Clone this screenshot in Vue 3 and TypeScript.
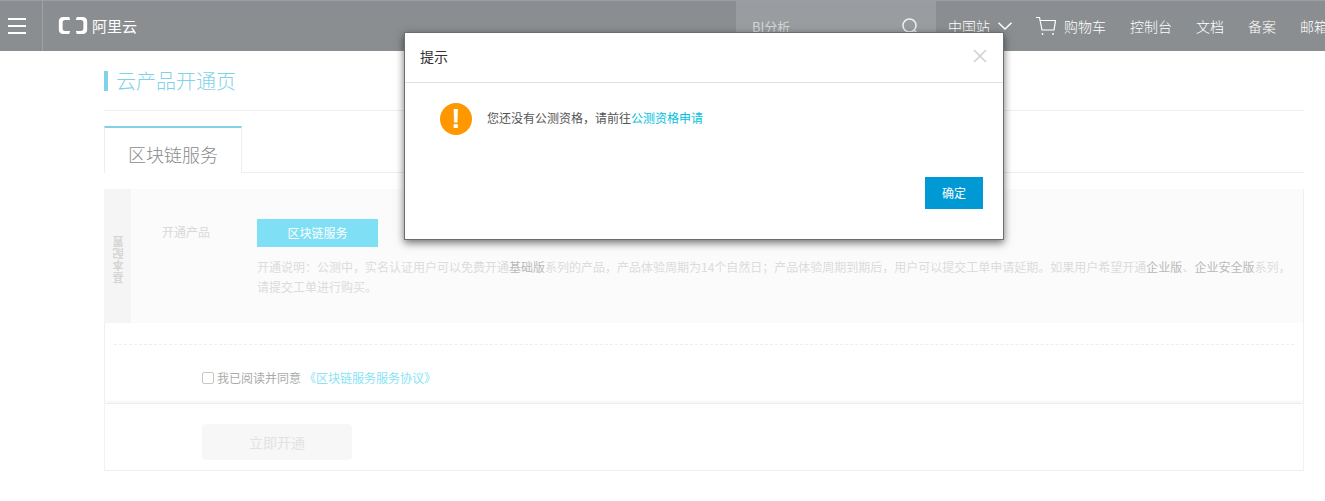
<script setup lang="ts">
const navLinks = ['控制台', '文档', '备案', '邮箱']
</script>

<template>
  <div class="page">
    <header class="topbar">
      <button class="menu-btn" aria-label="menu">
        <i></i>
        <i></i>
        <i></i>
      </button>
      <div class="logo">
        <svg width="30" height="17" viewBox="0 0 30 18">
          <path
            d="M11 0H4.500C1.800 0 0 1.800 0 4.500v9C0 16.200 1.800 18 4.500 18H11l1-3.200H6.500c-1.500 0-2.500-1-2.500-2.300V5.500C4 4.200 5 3.200 6.500 3.200H12z"
            fill="#fff"
          />
          <path
            d="M19 0h6.500C28.200 0 30 1.800 30 4.500v9c0 2.700-1.800 4.500-4.500 4.500H19l-1-3.200h5.500c1.500 0 2.500-1 2.500-2.300V5.500c0-1.300-1-2.300-2.500-2.300H18z"
            fill="#fff"
          />
        </svg>
        <span>阿里云</span>
      </div>
      <div class="search">
        <span>BI分析</span>
        <svg width="18" height="18" viewBox="0 0 18 18" fill="none" stroke="#eee" stroke-width="1.500">
          <circle cx="8.500" cy="8.500" r="6.500" />
          <path d="M13 13l3.500 3.500" />
        </svg>
      </div>
      <nav class="nav">
        <a class="region">
          中国站
          <svg width="14" height="8" viewBox="0 0 14 8" fill="none" stroke="#fff" stroke-width="1.500">
            <path d="M.5.700 7 7 13.500.700" />
          </svg>
        </a>
        <a class="cart">
          <svg width="20" height="20" viewBox="0 0 20 20" fill="none" stroke="#fff" stroke-width="1.200">
            <path d="M0 1.500h3.500L6 14h12l1.500-9.500H4" />
            <circle cx="6.500" cy="18" r=".9" fill="#fff" stroke="none" />
            <circle cx="17" cy="18" r=".9" fill="#fff" stroke="none" />
          </svg>
          购物车
        </a>
        <a v-for="link in navLinks" :key="link">{{ link }}</a>
      </nav>
    </header>

    <main class="content">
      <h1 class="title">云产品开通页</h1>
      <div class="tabs">
        <div class="tab">区块链服务</div>
      </div>

      <section class="box">
        <div class="config">
          <div class="config-side"><span>基本配置</span></div>
          <div class="config-body">
            <div class="row">
              <span class="row-label">开通产品</span>
              <span class="product">区块链服务</span>
            </div>
            <p class="desc">
              开通说明：公测中，实名认证用户可以免费开通<b>基础版</b>系列的产品，产品体验周期为14个自然日；产品体验周期到期后，用户可以提交工单申请延期。如果用户希望开通<b>企业版</b>、<b>企业安全版</b>系列，请提交工单进行购买。
            </p>
          </div>
        </div>
        <div class="agree-wrap">
          <label class="agree">
            <span class="check"></span>
            我已阅读并同意
            <a>《区块链服务服务协议》</a>
          </label>
        </div>
        <div class="footer">
          <button class="open-btn">立即开通</button>
        </div>
      </section>
    </main>

    <div class="dialog">
      <div class="dialog-head">
        <span>提示</span>
        <svg width="14" height="14" viewBox="0 0 14 14" stroke="#cfcfcf" stroke-width="1.500">
          <path d="M1 1l12 12M13 1 1 13" />
        </svg>
      </div>
      <div class="dialog-body">
        <span class="warn">!</span>
        <p>您还没有公测资格，请前往<a>公测资格申请</a></p>
      </div>
      <div class="dialog-foot">
        <button>确定</button>
      </div>
    </div>
  </div>
</template>

<style>
html,
body {
  margin: 0;
  height: 100%;
  overflow: hidden;
  background: #fff;
}
</style>

<style scoped>
.page {
  position: relative;
  height: 501px;
  overflow: hidden;
  font-family: 'Noto Sans CJK SC', 'Liberation Sans', sans-serif;
  font-size: 12px;
}
.topbar {
  display: flex;
  align-items: center;
  height: 50px;
  border-top: 1px solid #9a9eaa;
  background: #8b8e90;
  color: #fff;
  white-space: nowrap;
}
.menu-btn {
  display: flex;
  flex-direction: column;
  justify-content: center;
  flex-shrink: 0;
  gap: 5px;
  width: 43px;
  height: 100%;
  padding: 0 16px 0 8px;
  border: 0;
  border-right: 1px solid #a1a4a6;
  background: none;
}
.menu-btn i {
  display: block;
  height: 2px;
  background: #fff;
}
.logo {
  display: flex;
  align-items: center;
  gap: 4px;
  flex-shrink: 0;
  width: 678px;
  margin-left: 15px;
  padding-bottom: 1px;
  font-size: 15px;
}
.search {
  display: flex;
  align-items: center;
  justify-content: space-between;
  flex-shrink: 0;
  box-sizing: border-box;
  width: 200px;
  height: 100%;
  padding: 0 17px 0 16px;
  background: #9a9da0;
  color: #d5d6d7;
  font-size: 13px;
}
.nav {
  display: flex;
  align-items: center;
  gap: 24px;
  margin-left: 12px;
  font-size: 14px;
  font-weight: 300;
}
.region,
.cart {
  display: flex;
  align-items: center;
  gap: 8px;
}
.content {
  box-sizing: border-box;
  width: 1200px;
  margin-left: 104px;
}
.title {
  box-sizing: border-box;
  height: 40px;
  margin: 20px 0 0;
  padding-left: 12px;
  border-bottom: 1px solid #f0f0f0;
  background: linear-gradient(#7fd2e8, #7fd2e8) no-repeat 0 0 / 4px 20px;
  color: #7fd2e8;
  font-size: 20px;
  font-weight: 300;
  line-height: 20px;
}
.tabs {
  height: 46px;
  margin-top: 15px;
  border-bottom: 1px solid #eee;
}
.tab {
  box-sizing: border-box;
  width: 138px;
  height: 47px;
  border: 1px solid #eee;
  border-top: 2px solid #7fd2e8;
  border-bottom: 0;
  background: #fff;
  color: #8a8a8a;
  font-size: 18px;
  font-weight: 300;
  line-height: 52px;
  text-align: center;
}
.box {
  margin-top: 16px;
  border: 1px solid #efefef;
  border-top: 0;
}
.config {
  display: flex;
  height: 134px;
  margin-left: -1px;
  background: #fbfbfb;
}
.config-side {
  display: flex;
  align-items: center;
  justify-content: center;
  flex-shrink: 0;
  box-sizing: border-box;
  width: 27px;
  padding-top: 5px;
  background: #f5f5f5;
  color: #d6d6d6;
  font-size: 11px;
  font-weight: 700;
}
.config-side span {
  writing-mode: vertical-rl;
  transform: rotate(180deg);
  letter-spacing: 1px;
}
.config-body {
  flex: 1;
  padding: 30px 12px 0 31px;
}
.row {
  display: flex;
}
.row-label {
  width: 95px;
  padding-top: 4px;
  color: #d9d9d9;
}
.product {
  width: 121px;
  height: 28px;
  background: #7fe0f5;
  color: #fff;
  line-height: 27px;
  text-align: center;
}
.desc {
  margin: 10px 0 0 95px;
  color: #dcdcdc;
  line-height: 20px;
}
.desc b {
  font-weight: 400;
  color: #b9b9b9;
}
.agree-wrap {
  box-sizing: border-box;
  height: 59px;
  margin: 21px 9px 0;
  border-top: 1px dashed #eee;
}
.agree {
  display: flex;
  align-items: center;
  gap: 3px;
  padding: 24px 0 0 88px;
  color: #aaa;
}
.agree a {
  color: #8ae3f5;
}
.check {
  box-sizing: border-box;
  width: 12px;
  height: 12px;
  border: 1px solid #c8c8c8;
  border-radius: 2px;
  background: #fff;
}
.footer {
  box-sizing: border-box;
  height: 67px;
  padding: 20px 0 0 97px;
  border-top: 1px solid #eee;
  box-shadow: 0 -2px 3px #f6f6f6;
}
.open-btn {
  width: 150px;
  height: 36px;
  border: 0;
  border-radius: 4px;
  background: #f7f7f7;
  color: #e2e2e2;
  font: inherit;
  font-size: 14px;
}
.dialog {
  position: absolute;
  top: 32px;
  left: 404px;
  box-sizing: border-box;
  width: 600px;
  height: 208px;
  border: 1px solid #6b6d6e;
  background: #fff;
  box-shadow: 0 3px 8px rgba(0, 0, 0, 0.55);
  color: #333;
}
.dialog-head {
  display: flex;
  align-items: center;
  justify-content: space-between;
  box-sizing: border-box;
  height: 50px;
  padding: 0 16px 4px 15px;
  border-bottom: 1px solid #e1e1e1;
  font-size: 14px;
}
.dialog-body {
  display: flex;
  align-items: center;
  gap: 15px;
  padding: 20px 0 0 35px;
}
.dialog-body p {
  margin: 0 0 3px;
  color: #555;
}
.dialog-body a {
  color: #00c1de;
}
.warn {
  width: 32px;
  height: 32px;
  border-radius: 50%;
  background: #ff9800;
  color: #fff;
  font: 700 28px/32px 'Liberation Sans', sans-serif;
  text-align: center;
}
.dialog-foot {
  display: flex;
  justify-content: flex-end;
  padding: 42px 20px 0 0;
}
.dialog-foot button {
  width: 58px;
  height: 32px;
  padding: 0 0 2px;
  border: 0;
  background: #0099d4;
  color: #fff;
  font: inherit;
}
</style>
